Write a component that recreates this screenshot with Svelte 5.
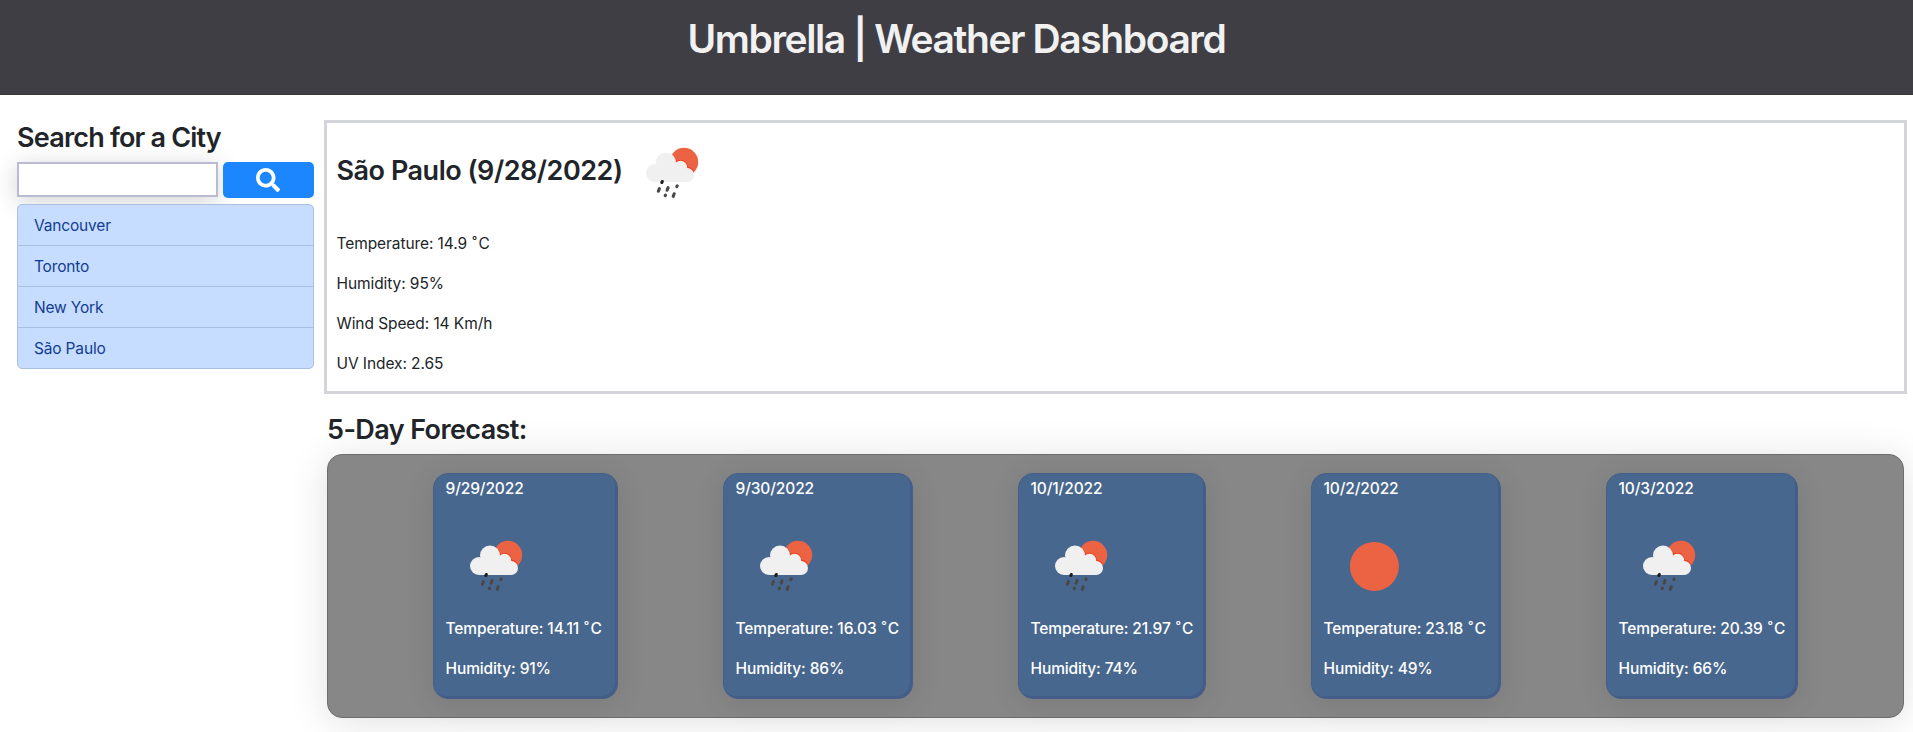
<script>
  const cities = ['Vancouver', 'Toronto', 'New York', 'São Paulo'];
  const days = [
    { date: '9/29/2022', icon: 'rain', temp: '14.11', humidity: 91, width: 185 },
    { date: '9/30/2022', icon: 'rain', temp: '16.03', humidity: 86, width: 190 },
    { date: '10/1/2022', icon: 'rain', temp: '21.97', humidity: 74, width: 188 },
    { date: '10/2/2022', icon: 'sun', temp: '23.18', humidity: 49, width: 190 },
    { date: '10/3/2022', icon: 'rain', temp: '20.39', humidity: 66, width: 192 }
  ];
</script>

{#snippet weather(kind)}
  <svg class="weather" viewBox="0 0 100 100" aria-hidden="true">
    {#if kind === 'sun'}
      <circle cx="50.4" cy="50.4" r="24.5" fill="#ec6344" />
    {:else}
      <circle cx="62" cy="39" r="14.2" fill="#ec6344" />
      <g fill="none" stroke="#f03c1e" stroke-width="1.2">
        <path d="M52.2 34.5Q54.5 37 54.4 39Q57 37.2 60 37.5Q64.5 38.5 65.3 44.4Q69 44.3 71.6 48.5" />
      </g>
      <g fill="#f0f0f1">
        <circle cx="33" cy="50" r="9" />
        <circle cx="44" cy="39.5" r="10" />
        <circle cx="58.5" cy="44.5" r="6.7" />
        <circle cx="65" cy="52" r="7" />
        <path d="M33 46h11l14-3 7 8v8H33z" />
      </g>
      <g stroke="#484848" stroke-width="3.1" stroke-linecap="round">
        <path d="M39.8 59.5l.5-1" stroke="#1d1d1d" />
        <path d="M36.4 68.2l1-2.6M45.1 67.2l1-2.6M54.8 63.6l.4-.7M43.2 72.6l.3-.5M51.2 73.4l1-2.6" />
      </g>
    {/if}
  </svg>
{/snippet}

{#snippet temperature(value)}
  Temperature: {value} <span class="degree">˚</span>C
{/snippet}

<header><h1>Umbrella | Weather Dashboard</h1></header>
<main>
  <aside>
    <h2>Search for a City</h2>
    <form>
      <input type="text" aria-label="City" />
      <button type="button" aria-label="Search">
        <svg viewBox="0 0 512 512"><path fill="currentColor" d="M505 442.7L405.3 343c-4.5-4.5-10.6-7-17-7H372c27.6-35.3 44-79.7 44-128C416 93.1 322.9 0 208 0S0 93.1 0 208s93.1 208 208 208c48.3 0 92.7-16.4 128-44v16.3c0 6.4 2.5 12.5 7 17l99.7 99.7c9.4 9.4 24.6 9.4 33.9 0l28.3-28.3c9.4-9.4 9.4-24.6.1-34zM208 336c-70.7 0-128-57.2-128-128 0-70.7 57.2-128 128-128 70.7 0 128 57.2 128 128 0 70.7-57.2 128-128 128z" /></svg>
      </button>
    </form>
    <ul>{#each cities as city}<li>{city}</li>{/each}</ul>
  </aside>
  <div class="content">
    <section class="current">
      <h2><span>São Paulo (9/28/2022)</span>{@render weather('rain')}</h2>
      <p>{@render temperature('14.9')}</p>
      <p>Humidity: 95%</p>
      <p>Wind Speed: 14 Km/h</p>
      <p>UV Index: 2.65</p>
    </section>
    <h2 class="forecast-title">5-Day Forecast:</h2>
    <section class="forecast">
      {#each days as day}
        <article style:width="{day.width}px">
          <p>{day.date}</p>
          {@render weather(day.icon)}
          <p>{@render temperature(day.temp)}</p>
          <p>Humidity: {day.humidity}%</p>
        </article>
      {/each}
    </section>
  </div>
</main>

<style>
  :global(body) {
    background: #fff;
    overflow: hidden;
  }
  :global(*) {
    box-sizing: border-box;
  }
  :global(#app) {
    min-height: 732px;
    color: #212529;
    font: 15.5px/24px Inter, 'Liberation Sans', sans-serif;
    letter-spacing: -0.08px;
  }
  h1, h2, p, ul {
    margin: 0;
    padding: 0;
  }
  header {
    height: 95px;
    padding-top: 15px;
    background: #3f3e44;
    border-bottom: 1px solid #37363b;
    text-align: center;
  }
  h1 {
    color: #f1f1f1;
    font-size: 39px;
    font-weight: 580;
    line-height: 48px;
    letter-spacing: -1.42px;
  }
  h2 {
    padding-top: 1px;
    font-size: 27px;
    font-weight: 580;
    line-height: 34px;
    letter-spacing: -0.8px;
    white-space: nowrap;
  }
  main {
    display: flex;
    padding: 25px 6px 0 17px;
  }
  aside {
    width: 297px;
    flex: none;
  }
  form {
    display: flex;
    gap: 5px;
    height: 36px;
    margin: 7px 0 6px;
  }
  input {
    width: 201px;
    height: 35px;
    border: 2px solid #babad3;
    padding: 0 8px;
    box-shadow: 0 4px 24px rgba(0, 0, 0, 0.18);
  }
  button {
    display: flex;
    flex: 1;
    align-items: center;
    justify-content: center;
    border: 0;
    border-radius: 5px;
    padding: 0 1px 0 0;
    color: #fff;
    background: #1c86ff;
    position: relative;
  }
  button svg {
    width: 24px;
    height: 24px;
  }
  ul {
    position: relative;
    list-style: none;
    color: #113c92;
    background: #c7ddff;
    border: 1px solid #a9c0e4;
    border-radius: 5px;
    letter-spacing: -0.17px;
  }
  li {
    height: 41px;
    padding: 9px 16px 0;
  }
  li:first-child {
    height: 40px;
  }
  li + li {
    border-top: 1px solid #a9c0e4;
  }
  .content {
    flex: 1;
    margin-left: 10px;
  }
  .current {
    height: 274px;
    border: 3px solid #d4d4db;
    padding-left: 9.5px;
  }
  .current h2 {
    display: flex;
    align-items: center;
    padding-top: 0;
    margin-bottom: 8px;
    letter-spacing: -0.48px;
  }
  .current h2 span {
    width: 285.5px;
    padding-bottom: 5px;
  }
  p {
    padding-top: 1px;
    margin-bottom: 15px;
    white-space: nowrap;
  }
  .degree {
    margin: 0 1.5px 0 1px;
  }
  .weather {
    display: block;
    width: 100px;
    height: 100px;
    flex: none;
  }
  .forecast-title {
    margin: 18px 0 7px 3px;
    letter-spacing: -0.6px;
  }
  .forecast {
    display: flex;
    justify-content: space-evenly;
    align-items: center;
    height: 264px;
    margin: 0 3px;
    border: 1px solid #6d6d6e;
    border-radius: 15px;
    background: #878788;
    box-shadow: 0 4px 40px rgba(0, 0, 0, 0.12);
  }
  article {
    height: 226px;
    padding: 2px 11.5px;
    border: 1px solid #455f8a;
    border-radius: 15px;
    color: #fff;
    font-weight: 450;
    letter-spacing: -0.12px;
    background: #48678f;
    box-shadow: 0 4px 30px rgba(0, 0, 0, 0.1), inset -2px -2px 0 #445d88;
    white-space: nowrap;
  }
</style>
